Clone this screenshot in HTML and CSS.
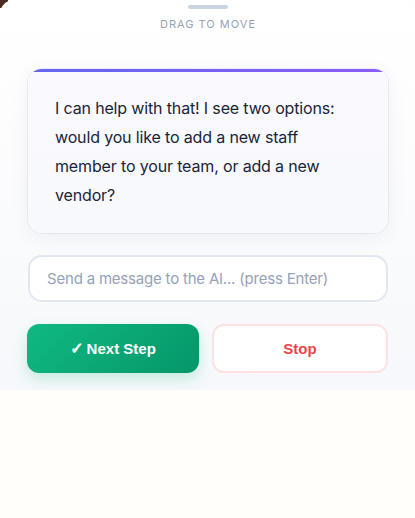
FILE: index.html
```html
<!DOCTYPE html>
<html>
<head>
<meta charset="utf-8">
<link rel="stylesheet" href="styles.css">
</head>
<body>
<div class="corner"></div>
<div class="panel">
  <div class="handle-area">
    <div class="handle"></div>
    <div class="drag-label">DRAG TO MOVE</div>
  </div>
  <div class="message">
    <p>I can help with that! I see two options: would you like to add a new staff member to your team, or add a new vendor?</p>
  </div>
  <input class="chat-input" type="text" placeholder="Send a message to the AI... (press Enter)">
  <div class="actions">
    <button class="btn btn-next"><span class="check">✓</span>Next Step</button>
    <button class="btn btn-stop">Stop</button>
  </div>
</div>
</body>
</html>
```

FILE: styles.css
```css
html, body {
  margin: 0;
  padding: 0;
}
body {
  background: #fffefb;
  font-family: Inter, "Noto Sans", sans-serif;
  position: relative;
}
.corner {
  position: absolute;
  left: 0;
  top: 0;
  width: 8px;
  height: 8px;
  background: #4a2a22;
}
.panel {
  position: relative;
  height: 390px;
  box-sizing: border-box;
  padding: 5px 27px 0 28px;
  background: linear-gradient(180deg, #ffffff 0%, #fdfdfe 30%, #f6f8fb 100%);
  border-radius: 14px 14px 0 0;
  display: flex;
  flex-direction: column;
}
.handle-area {
  display: flex;
  flex-direction: column;
  align-items: center;
}
.handle {
  width: 40px;
  height: 4px;
  border-radius: 2px;
  background: #cbd5e1;
}
.drag-label {
  margin-top: 7px;
  font-size: 11px;
  line-height: 16px;
  letter-spacing: 1px;
  color: #94a3b8;
  font-weight: 400;
}
.message {
  position: relative;
  margin-top: 37px;
  border-radius: 14px;
  background: linear-gradient(180deg, #f9f9fe 0%, #f8f9fd 100%);
  box-shadow: 0 4px 18px rgba(100, 116, 139, 0.09), 0 0 0 1px rgba(226, 232, 240, 0.6);
  padding: 25px 26px 23px 27px;
  overflow: hidden;
}
.message::before {
  content: "";
  position: absolute;
  left: 0;
  right: 0;
  top: 0;
  height: 3px;
  background: linear-gradient(90deg, #6366f1, #8b5cf6);
}
.message p {
  margin: 0;
  font-size: 16px;
  line-height: 29px;
  letter-spacing: -0.15px;
  color: #1a2537;
}
.chat-input {
  margin-top: 22px;
  height: 47px;
  box-sizing: border-box;
  border: 2px solid #e2e8f0;
  border-radius: 14px;
  background: #ffffff;
  padding: 0 17px;
  font-family: Inter, "Noto Sans", sans-serif;
  font-size: 15px;
  letter-spacing: -0.2px;
  color: #1e293b;
  outline: none;
}
.chat-input::placeholder {
  color: #94a3b8;
}
.actions {
  margin-top: 22px;
  display: flex;
  gap: 13px;
}
.btn {
  flex: 1;
  height: 49px;
  border-radius: 12px;
  font-family: "Liberation Sans", Arial, sans-serif;
  font-weight: bold;
  font-size: 15px;
  cursor: pointer;
}
.check {
  font-family: "DejaVu Sans", sans-serif;
  font-size: 16px;
  -webkit-text-stroke: 0.7px #ffffff;
  margin-right: 3px;
}
.btn-next {
  border: none;
  color: #ffffff;
  background: linear-gradient(135deg, #10b981 0%, #059669 100%);
  box-shadow: 0 6px 14px rgba(16, 185, 129, 0.22);
  margin-left: -1px;
}
.btn-stop {
  border: 2px solid #fee2e2;
  background: #ffffff;
  color: #ef4444;
}
```
